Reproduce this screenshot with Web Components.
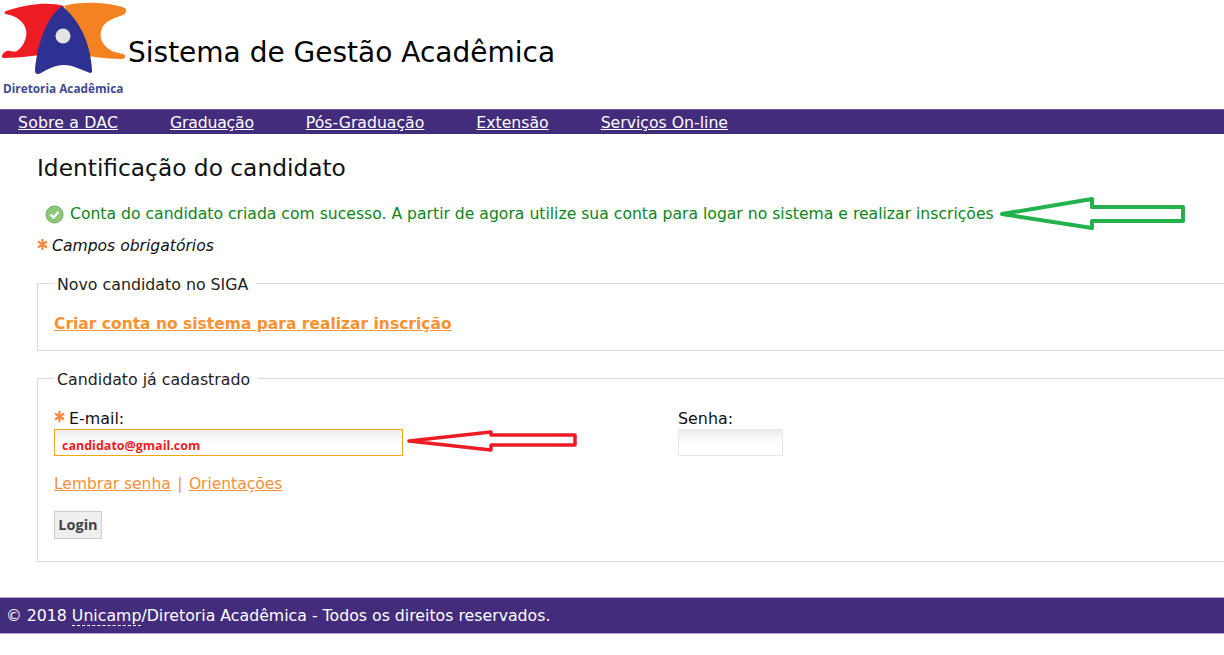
<!DOCTYPE html>
<html lang="pt">
<head>
<meta charset="utf-8">
<title>Sistema de Gestão Acadêmica</title>
<style>
  html, body {
    margin: 0;
    padding: 0;
    background: #fff;
    font-family: "DejaVu Sans", Verdana, sans-serif;
    overflow: hidden;
  }
</style>
</head>
<body>
<dac-header></dac-header>
<dac-nav></dac-nav>
<login-page></login-page>
<dac-footer></dac-footer>

<script>
const STAR = `<svg width="11" height="13" viewBox="0 0 11 13"><g stroke="#f58a40" stroke-width="2.200"><path d="M5.500 1v11M1 3.500l9 6M1 9.500l9-6"/></g></svg>`;

class DacHeader extends HTMLElement {
  constructor() {
    super();
    this.attachShadow({ mode: "open" });
    this.shadowRoot.innerHTML = `
<style>
  :host { display: flex; height: 109px; align-items: flex-start; }
  .logo { width: 128px; height: 97px; flex: none; display: flex; flex-direction: column; }
  .logo svg { display: block; }
  .logo span { font: bold 11.800px "Open Sans", "DejaVu Sans", sans-serif; line-height: 16px; color: #3f4a94; margin: 0 0 0 3px; white-space: nowrap; }
  h1 { margin: 34px 0 0 0; font-weight: normal; font-size: 28px; line-height: 37px; color: #000; white-space: nowrap; }
</style>
<div class="logo">
  <svg width="128" height="80" viewBox="0 0 128 80">
    <path d="M64 6C50 2 30 3 6 11C4 12 4 14 6 14C16 16 24 21 26 30C28 38 22 48 17 51C13 53 9 49 5 52C2 54 1 57 3 58C14 58 26 57 40 55z" fill="#ed1c24"/>
    <path d="M64 6C80 1 108 2 125 8C127 10 126 14 123 15C115 18 106 20 102 28C98 38 103 46 112 51C116 53 122 53 125 55C126 57 124 59 122 59C112 59 100 58 88 56z" fill="#f58220"/>
    <path d="M62 6C50 15 43 30 38 50C36 60 35 66 35 71C35 74 38 75 41 73C48 69 55 65 64 65C73 65 82 70 90 73C92 73 92 72 92 70C91 50 84 24 62 6z" fill="#2e3192"/>
    <circle cx="63" cy="36" r="7.500" fill="#e4e4e8"/>
  </svg>
  <span>Diretoria Acadêmica</span>
</div>
<h1><slot>Sistema de Gestão Acadêmica</slot></h1>`;
  }
}
customElements.define("dac-header", DacHeader);

class DacNav extends HTMLElement {
  constructor() {
    super();
    this.attachShadow({ mode: "open" });
    const items = [
      ["Sobre a DAC", 0.18],
      ["Graduação", -0.2],
      ["Pós-Graduação", 0],
      ["Extensão", 0],
      ["Serviços On-line", 0],
    ];
    this.shadowRoot.innerHTML = `
<style>
  :host { display: flex; gap: 52px; height: 25px; background: #432c7c; padding-left: 18px; font-size: 15.700px; line-height: 27px; box-shadow: inset 0 1px 0 #6a5a98; }
  a { color: #fff; text-decoration: underline; white-space: nowrap; }
</style>
${items.map(([t, ls]) => `<a href="#" style="letter-spacing:${ls}px">${t}</a>`).join("")}`;
  }
}
customElements.define("dac-nav", DacNav);

class FieldBox extends HTMLElement {
  static get observedAttributes() {
    return ["label"];
  }

  constructor() {
    super();
    this.attachShadow({ mode: "open" });
    this.shadowRoot.innerHTML = `
<style>
  :host { display: block; margin-left: 37px; margin-right: -3px; }
  fieldset { margin: 0; border: 1px solid #dcd8d8; border-right: 0; padding: 0 0 0 16px; min-width: 0; }
  legend { padding: 4px 8px 0 3px; margin-left: 0; font-size: 15.800px; line-height: 18px; color: #222; }
</style>
<fieldset><legend></legend><slot></slot></fieldset>`;
  }

  attributeChangedCallback(name, oldVal, newVal) {
    if (name === "label") {
      this.shadowRoot.querySelector("legend").textContent = newVal;
    }
  }
}
customElements.define("field-box", FieldBox);

class ArrowMark extends HTMLElement {
  constructor() {
    super();
    this.attachShadow({ mode: "open" });
    const color = this.getAttribute("color");
    const w = this.getAttribute("w");
    const h = this.getAttribute("h");
    const pts = this.getAttribute("points");
    this.shadowRoot.innerHTML = `
<style>
  :host { display: block; position: absolute; left: ${this.getAttribute("x")}px; top: ${this.getAttribute("y")}px; }
  svg { display: block; }
</style>
<svg width="${w}" height="${h}" viewBox="0 0 ${w} ${h}"><polygon points="${pts}" fill="none" stroke="${color}" stroke-width="${this.getAttribute("sw")}" stroke-linejoin="round"/></svg>`;
  }
}
customElements.define("arrow-mark", ArrowMark);

class LoginPage extends HTMLElement {
  constructor() {
    super();
    this.attachShadow({ mode: "open" });
    this.shadowRoot.innerHTML = `
<style>
  :host { display: block; height: 463px; position: relative; overflow: hidden; }
  h2 { margin: 0; padding: 19px 0 0 37px; font-weight: normal; font-size: 23.300px; line-height: 29px; color: #111; }
  .ok { display: flex; align-items: center; gap: 6px; margin: 22px 0 0 45px; color: #0d8420; font-size: 15.630px; line-height: 20px; white-space: nowrap; }
  .req { display: flex; align-items: center; gap: 4px; margin: 12px 0 16px 37px; font-style: italic; font-size: 15.600px; line-height: 20px; color: #111; }
  .req svg { margin-top: -3px; }
  .first { height: 56px; padding-top: 20px; box-sizing: border-box; }
  .first a { font-weight: bold; font-size: 15.500px; line-height: 20px; color: #f79232; }
  .spacer { height: 16px; }
  .cols { display: grid; grid-template-columns: 624px 105px; margin-top: 19px; }
  label { display: flex; align-items: center; gap: 4px; font-size: 15.900px; line-height: 21px; height: 21px; color: #111; }
  label svg { margin-top: -5px; }
  .input { box-sizing: border-box; height: 27px; background: linear-gradient(#ececec, #fff 55%); display: flex; align-items: center; padding-left: 7px; }
  .mail { width: 349px; border: 1px solid #f9a51a; padding-top: 5px; font: bold 12.500px "Open Sans", sans-serif; color: #ed1c24; }
  .pass { width: 105px; border: 1px solid #e8e8e8; }
  .links { margin-top: 17px; font-size: 15.500px; line-height: 22px; color: #f58f3c; }
  .links a { color: #f58f3c; }
  .links span { margin: 0 1.500px; }
  button { display: block; margin: 16px 0 22px; box-sizing: border-box; width: 48px; height: 28px; padding: 0 0 2px; border: 1px solid #ccc; background: #efefef; color: #444; font: bold 14.500px "Open Sans", sans-serif; }
</style>
<h2>Identificação do candidato</h2>
<div class="ok">
  <svg width="19" height="19" viewBox="0 0 19 19">
    <circle cx="9.500" cy="9.500" r="8.500" fill="#8cc878" stroke="#6da85e"/>
    <path d="M5.500 9.500l3 3 5-5.500" fill="none" stroke="#fff" stroke-width="2.400"/>
  </svg>
  <span>Conta do candidato criada com sucesso. A partir de agora utilize sua conta para logar no sistema e realizar inscrições</span>
</div>
<div class="req">${STAR}<span>Campos obrigatórios</span></div>
<field-box label="Novo candidato no SIGA">
  <div class="first"><a href="#">Criar conta no sistema para realizar inscrição</a></div>
</field-box>
<div class="spacer"></div>
<field-box label="Candidato já cadastrado">
  <div class="cols">
    <div>
      <label>${STAR}<span>E-mail:</span></label>
      <div class="input mail">candidato@gmail.com</div>
    </div>
    <div>
      <label>Senha:</label>
      <div class="input pass"></div>
    </div>
  </div>
  <div class="links"><a href="#">Lembrar senha</a> <span>|</span> <a href="#">Orientações</a></div>
  <button type="button">Login</button>
</field-box>
<arrow-mark color="#22b14c" sw="4" x="998" y="56" w="192" h="42" points="4,24 94,9 94,17 185,17 185,31 94,31 94,38"></arrow-mark>
<arrow-mark color="#ed1c24" sw="3.500" x="405" y="294" w="175" h="28" points="4,13 86,4 86,7 170,7 170,17 86,17 86,22"></arrow-mark>
`;
  }
}
customElements.define("login-page", LoginPage);

class DacFooter extends HTMLElement {
  constructor() {
    super();
    this.attachShadow({ mode: "open" });
    this.shadowRoot.innerHTML = `
<style>
  :host { display: block; height: 37px; box-sizing: border-box; background: #432c7c; color: #fff; padding-left: 6px; font-size: 15.750px; line-height: 36px; white-space: nowrap; border-top: 1px solid #b0a6c8; border-bottom: 1px solid #b0a6c8; }
  abbr { border-bottom: 1px dashed #fff; }
</style>
© 2018 <abbr>Unicamp</abbr>/Diretoria Acadêmica - Todos os direitos reservados.`;
  }
}
customElements.define("dac-footer", DacFooter);
</script>
</body>
</html>
